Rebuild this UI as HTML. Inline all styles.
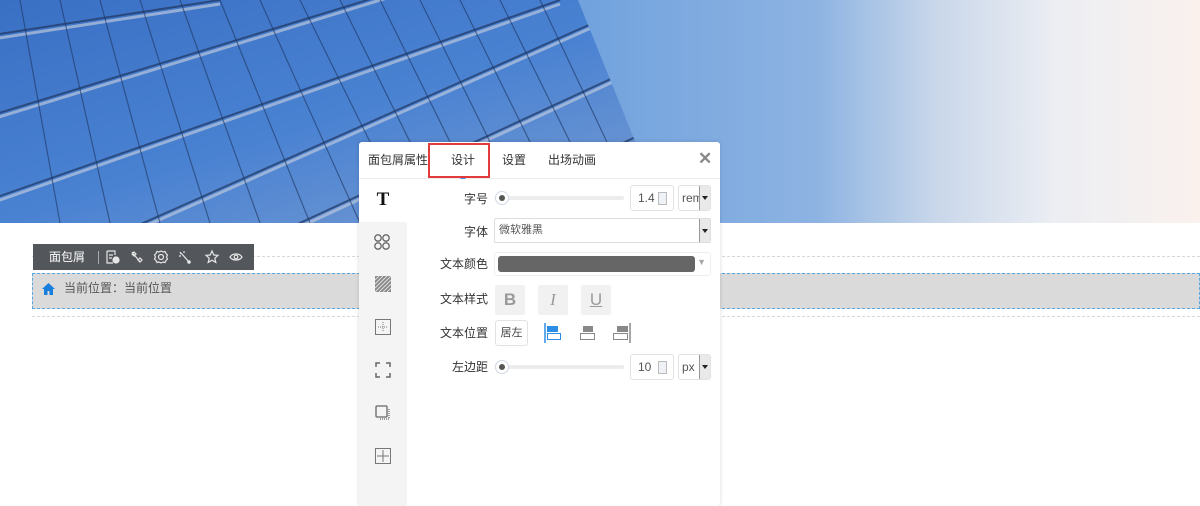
<!DOCTYPE html>
<html><head><meta charset="utf-8"><style>
*{box-sizing:border-box;margin:0;padding:0}
body{width:1200px;height:506px;overflow:hidden;background:#fff;font-family:"Liberation Sans","Noto Sans CJK SC",sans-serif;font-size:12px;color:#333;position:relative}
.abs{position:absolute}
.lbl{position:absolute;right:232px;width:80px;text-align:right;font-size:12px;color:#333;line-height:14px}
.ibtn{position:absolute;width:30px;height:30px;background:#f1f1f1;border-radius:2px;text-align:center;line-height:30px;font-size:17px;color:#999}
.num{position:absolute;width:44px;height:26px;border:1px solid #e2e2e2;border-radius:3px;background:#fff;font-size:12px;color:#555;line-height:24px;padding-left:7px}
.num i{position:absolute;right:6px;top:6px;width:9px;height:13px;border:1px solid #bbb;background:#eef2f7}
.unit{position:absolute;width:33px;height:26px;border:1px solid #e2e2e2;border-radius:3px;background:#fff;font-size:12px;color:#555;line-height:24px;padding-left:3px;overflow:hidden}
.unit b,.dd{position:absolute;right:0;top:0;width:11px;height:24px;background:#e9e9e9;border-left:1px solid #999}
.unit b:after,.dd:after{content:"";position:absolute;left:2px;top:10px;border:3px solid transparent;border-top:4px solid #222}
.slider{position:absolute;height:4px;background:#ececec;border-radius:2px}
.knob{position:absolute;width:14px;height:14px;border-radius:50%;background:#fff;border:1px solid #cfd8e6}
.knob:after{content:"";position:absolute;left:3px;top:3px;width:6px;height:6px;border-radius:50%;background:#555}
.side{position:absolute;left:0;width:48px;text-align:center}
</style></head><body>
<svg class="abs" style="left:0;top:0" width="1200" height="223">
<defs>
<linearGradient id="sky" x1="0" y1="0" x2="1" y2="0">
<stop offset="0.45" stop-color="#6c9fdd"/><stop offset="0.68" stop-color="#8db3e2"/><stop offset="0.78" stop-color="#c9d7ea"/><stop offset="0.88" stop-color="#eceef3"/><stop offset="1" stop-color="#faf1ed"/></linearGradient>
<linearGradient id="bld" x1="0" y1="0" x2="1" y2="1">
<stop offset="0" stop-color="#3a70c4"/><stop offset="0.5" stop-color="#4a82d2"/><stop offset="1" stop-color="#7d9fd2"/></linearGradient>
<clipPath id="cp"><polygon points="0,0 578,0 668,223 0,223"/></clipPath>
</defs>
<rect width="1200" height="223" fill="url(#sky)"/>
<g clip-path="url(#cp)">
<rect width="700" height="223" fill="url(#bld)"/>
<g stroke="#223a66" stroke-width="2" opacity="0.75">
<line x1="-40" y1="40" x2="220" y2="0"/><line x1="-40" y1="125" x2="400" y2="-10"/><line x1="-40" y1="210" x2="560" y2="0"/><line x1="60" y1="260" x2="600" y2="20"/><line x1="220" y1="260" x2="630" y2="70"/><line x1="380" y1="260" x2="650" y2="130"/>
</g>
<g stroke="#b9c6dc" stroke-width="3" opacity="0.7">
<line x1="-40" y1="44" x2="220" y2="4"/><line x1="-40" y1="129" x2="400" y2="-6"/><line x1="-40" y1="214" x2="560" y2="4"/><line x1="60" y1="264" x2="600" y2="24"/><line x1="220" y1="264" x2="630" y2="74"/>
</g>
<g stroke="#1d3560" stroke-width="1.2" opacity="0.6">
<line x1="20" y1="0" x2="60" y2="223"/><line x1="60" y1="0" x2="110" y2="223"/><line x1="100" y1="0" x2="160" y2="223"/><line x1="140" y1="0" x2="210" y2="223"/><line x1="180" y1="0" x2="260" y2="223"/><line x1="220" y1="0" x2="310" y2="223"/><line x1="260" y1="0" x2="360" y2="223"/><line x1="300" y1="0" x2="410" y2="223"/><line x1="340" y1="0" x2="450" y2="223"/><line x1="380" y1="0" x2="490" y2="223"/><line x1="420" y1="0" x2="530" y2="223"/><line x1="460" y1="0" x2="570" y2="223"/><line x1="500" y1="0" x2="610" y2="223"/><line x1="540" y1="0" x2="645" y2="223"/>
</g>
</g>
</svg>

<div class="abs" style="left:32px;top:256px;width:1168px;border-top:1px dashed #d8d8d8"></div>
<div class="abs" style="left:32px;top:316px;width:1168px;border-top:1px dashed #d8d8d8"></div>
<div class="abs" style="left:32px;top:273px;width:1168px;height:36px;background:#dadada;border:1px dashed #5aa7e0"></div>
<svg class="abs" style="left:42px;top:283px" width="13" height="12" viewBox="0 0 13 12"><path d="M6.5 0L0 6h2v6h3.5V8h2v4H11V6h2z" fill="#1a7fdc"/></svg>
<div class="abs" style="left:64px;top:281px;font-size:12px;color:#555;line-height:14px">当前位置：当前位置</div>
<div class="abs" style="left:33px;top:244px;width:221px;height:26px;background:#53565b"></div>
<div class="abs" style="left:49px;top:250px;color:#fff;font-size:12px;line-height:14px">面包屑</div>
<div class="abs" style="left:98px;top:251px;width:1px;height:13px;background:#aaa"></div>
<svg class="abs" style="left:104px;top:248px" width="150" height="18" viewBox="0 0 150 18" fill="none" stroke="#e6e6e6" stroke-width="1.2">
<path d="M3 3h8v4M3 3v12h6M5 7h4M5 10h3"/><circle cx="12" cy="12" r="3" fill="#e6e6e6"/>
<path d="M28 4l8 10M28 6l2-2 2 2-2 2zM34 12l2-2 2 2-2 2z"/>
<circle cx="57" cy="9" r="2.5"/><path d="M57 3l2 1 2-0.5 1 2 1.5 1.5-1 2 1 2-1.5 1.5-1 2-2-0.5-2 1-2-1-2 0.5-1-2-1.5-1.5 1-2-1-2 1.5-1.5 1-2 2 0.5z"/>
<path d="M77 5l8 9M76 4l1 2M80 3v2M75 8h2" /><circle cx="85" cy="14" r="1.2" fill="#e6e6e6"/>
<path d="M108 3l1.8 4 4.2.4-3.2 2.8 1 4.2-3.8-2.2-3.8 2.2 1-4.2-3.2-2.8 4.2-.4z"/>
<path d="M126 9c2.5-4 9.5-4 12 0-2.5 4-9.5 4-12 0z"/><circle cx="132" cy="9" r="1.8"/>
</svg>

<div class="abs" style="left:359px;top:142px;width:361px;height:364px;background:#fff;border-radius:3px;box-shadow:0 0 4px rgba(0,0,0,.15)">
<div class="abs" style="left:0;top:36px;width:361px;border-top:1px solid #ececec"></div>
<div class="abs" style="left:9px;top:11px;font-size:12px;color:#333;line-height:14px">面包屑属性</div>
<div class="abs" style="left:92px;top:11px;font-size:12px;color:#333;line-height:14px">设计</div>
<div class="abs" style="left:143px;top:11px;font-size:12px;color:#333;line-height:14px">设置</div>
<div class="abs" style="left:189px;top:11px;font-size:12px;color:#333;line-height:14px">出场动画</div>
<div class="abs" style="left:339px;top:7px;font-size:17px;color:#888;font-weight:bold">✕</div>
<div class="abs" style="left:79px;top:34px;width:52px;height:2px;background:#5c5ca8"></div>
<div class="abs" style="left:101px;top:31px;border:3px solid transparent;border-bottom:3px solid #3b8ee0"></div>
<div class="abs" style="left:69px;top:1px;width:62px;height:35px;border:2px solid #e23b3b"></div>
<div class="abs" style="left:0;top:80px;width:48px;height:284px;background:#f4f4f4"></div>
<div class="side" style="top:47px;font-family:'Liberation Serif',serif;font-weight:bold;font-size:19px;color:#111">T</div>
<svg class="abs" style="left:14px;top:91px" width="18" height="18" viewBox="0 0 18 18" fill="none" stroke="#666" stroke-width="1.3"><circle cx="5" cy="5" r="3.2"/><circle cx="13" cy="5" r="3.2"/><circle cx="5" cy="13" r="3.2"/><circle cx="13" cy="13" r="3.2"/></svg>
<svg class="abs" style="left:16px;top:134px" width="16" height="16" viewBox="0 0 16 16"><rect width="16" height="16" fill="#888"/><path d="M0 4l4-4M0 8l8-8M0 12l12-12M0 16l16-16M4 16l12-12M8 16l8-8M12 16l4-4" stroke="#ddd" stroke-width="1"/></svg>
<svg class="abs" style="left:16px;top:177px" width="16" height="16" viewBox="0 0 16 16" fill="none" stroke="#777"><rect x=".5" y=".5" width="15" height="15"/><path d="M8 3v10M3 8h10" stroke-dasharray="1 1"/></svg>
<svg class="abs" style="left:16px;top:220px" width="16" height="16" viewBox="0 0 16 16" fill="none" stroke="#666" stroke-width="1.5"><path d="M1 5V1h4M11 1h4v4M15 11v4h-4M5 15H1v-4"/></svg>
<svg class="abs" style="left:16px;top:263px" width="16" height="16" viewBox="0 0 16 16" fill="none" stroke="#666" stroke-width="1.3"><rect x="1" y="1" width="11" height="11" rx="1"/><path d="M14 4v10H4" stroke-dasharray="1 1"/></svg>
<svg class="abs" style="left:16px;top:306px" width="16" height="16" viewBox="0 0 16 16" fill="none" stroke="#777"><rect x=".5" y=".5" width="15" height="15"/><path d="M8 2v12M2 8h12"/></svg>
<div class="lbl" style="top:50px">字号</div>
<div class="slider" style="left:137px;top:54px;width:128px"></div>
<div class="knob" style="left:136px;top:49px"></div>
<div class="num" style="left:271px;top:43px">1.4<i></i></div>
<div class="unit" style="left:319px;top:43px">rem<b></b></div>
<div class="lbl" style="top:83px">字体</div>
<div class="abs" style="left:135px;top:76px;width:217px;height:25px;border:1px solid #ddd;border-radius:2px;font-size:11px;color:#555;line-height:23px;padding-left:4px">微软雅黑<span class="dd" style="height:23px"></span></div>
<div class="lbl" style="top:115px">文本颜色</div>
<div class="abs" style="left:135px;top:110px;width:217px;height:24px;border:1px solid #eee;border-radius:3px"><div class="abs" style="left:3px;top:3px;width:197px;height:16px;background:#666;border-radius:3px"></div><span class="abs" style="right:4px;top:4px;font-size:9px;color:#aaa">▼</span></div>
<div class="lbl" style="top:150px">文本样式</div>
<div class="ibtn" style="left:136px;top:143px;font-weight:bold">B</div>
<div class="ibtn" style="left:179px;top:143px;font-style:italic;font-family:'Liberation Serif',serif">I</div>
<div class="ibtn" style="left:222px;top:143px;text-decoration:underline">U</div>
<div class="lbl" style="top:184px">文本位置</div>
<div class="abs" style="left:136px;top:178px;width:33px;height:26px;border:1px solid #e2e2e2;border-radius:3px;font-size:11px;line-height:24px;text-align:center;color:#444">居左</div>
<svg class="abs" style="left:185px;top:181px" width="18" height="20" viewBox="0 0 18 20"><path d="M1 0v20" stroke="#2b8ee6" stroke-width="1.5"/><rect x="3" y="3" width="11" height="6" fill="#2b8ee6"/><rect x="3.5" y="10.5" width="13" height="6" fill="none" stroke="#2b8ee6"/></svg>
<svg class="abs" style="left:220px;top:181px" width="18" height="20" viewBox="0 0 18 20"><rect x="4" y="3" width="10" height="6" fill="#888"/><rect x="1.5" y="10.5" width="14" height="6" fill="none" stroke="#888"/></svg>
<svg class="abs" style="left:253px;top:181px" width="20" height="20" viewBox="0 0 20 20"><path d="M18 0v20" stroke="#888" stroke-width="1.5"/><rect x="5" y="3" width="11" height="6" fill="#888"/><rect x="1.5" y="10.5" width="14" height="6" fill="none" stroke="#888"/></svg>
<div class="lbl" style="top:218px">左边距</div>
<div class="slider" style="left:137px;top:223px;width:128px"></div>
<div class="knob" style="left:136px;top:218px"></div>
<div class="num" style="left:271px;top:212px">10<i></i></div>
<div class="unit" style="left:319px;top:212px">px<b></b></div>
</div>
</body></html>
